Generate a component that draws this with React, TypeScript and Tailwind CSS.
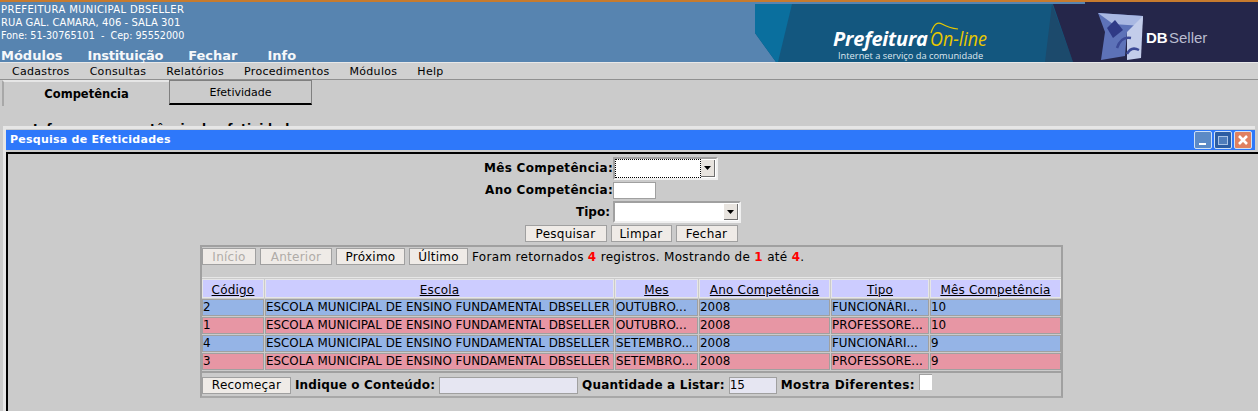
const rows = [
  { cod: '2', mes: 'OUTUBRO...', tipo: 'FUNCIONÁRI...', num: '10', bg: 'bg-[#95b4e6]' },
  { cod: '1', mes: 'OUTUBRO...', tipo: 'PROFESSORE...', num: '10', bg: 'bg-[#e796a4]' },
  { cod: '4', mes: 'SETEMBRO...', tipo: 'FUNCIONÁRI...', num: '9', bg: 'bg-[#95b4e6]' },
  { cod: '3', mes: 'SETEMBRO...', tipo: 'PROFESSORE...', num: '9', bg: 'bg-[#e796a4]' },
];

const headers = [
  { label: 'Código', w: 'w-[62px]' },
  { label: 'Escola', w: 'w-[349px]' },
  { label: 'Mes', w: 'w-[83px]' },
  { label: 'Ano Competência', w: 'w-[131px]' },
  { label: 'Tipo', w: 'w-[98px]' },
  { label: 'Mês Competência', w: 'w-[131px]' },
];

const cellClass = 'border border-[#a0a0a0] h-[17px] p-0 text-left whitespace-nowrap overflow-hidden leading-[15px] text-[11.9px]';

function Btn({ label, className, disabled }: { label: string; className: string; disabled?: boolean }) {
  return (
    <div className={`h-[17px] flex items-center justify-center bg-[#efebe7] border border-[#a0a0a0] text-[12px] font-normal tracking-[0.25px] ${disabled ? 'text-[#b0aca8]' : 'text-black'} ${className}`}>
      {label}
    </div>
  );
}

function FakeSelect({ className, focused }: { className: string; focused?: boolean }) {
  return (
    <div className={`flex items-stretch border-2 border-t-[#a0a0a0] border-l-[#a0a0a0] border-r-[#f0f0f0] border-b-[#f0f0f0] bg-white ${className}`}>
      <div className={`flex-1 ${focused ? 'border border-dotted border-black' : ''}`} />
      <div className="w-[14px] my-px mr-px flex items-center justify-center bg-[#e8e4df] border-r border-b border-[#707070]">
        <svg width="7" height="4" viewBox="0 0 7 4"><path d="M0 0h7L3.5 4z" fill="#000" /></svg>
      </div>
    </div>
  );
}

function WinBtn({ kind }: { kind: 'min' | 'max' | 'close' }) {
  const bg = kind === 'min' ? 'bg-[#5c8ac6]' : kind === 'max' ? 'bg-[#2c5da3]' : 'bg-[#e08060]';
  return (
    <div className={`w-[18px] h-[18px] rounded-[2px] border border-[#cfe0f5] flex items-center justify-center ${bg}`}>
      <svg width="14" height="14" viewBox="0 0 14 14">
        {kind === 'min' && <rect x="3" y="10" width="7" height="2" fill="#fff" />}
        {kind === 'max' && <rect x="2.5" y="3.5" width="9" height="8" fill="#4f7dbb" stroke="#a9c3e6" />}
        {kind === 'close' && <path d="M3 3l8 8M11 3l-8 8" stroke="#fff" strokeWidth="2.6" />}
      </svg>
    </div>
  );
}

function Banner() {
  return (
    <svg width="503" height="60" viewBox="0 0 503 60" className="shrink-0">
      <path d="M0 2H330V0H503V60H21L0 31z" fill="#13577f" />
      <path d="M0 2H37L23 60H21L0 31z" fill="#0a6f9e" />
      <path d="M297 2L290 60H318z" fill="#1c4a6c" />
      <path d="M298 2H330V0H503V60H318z" fill="#25264a" />
      {/* DBSeller cube */}
      <path d="M343 11L388 14L386 28L372 30L370 54L346 58L350 30z" fill="#5d72b8" />
      <path d="M343 11L388 14L387 24L358 22z" fill="#a9b8e2" />
      <path d="M372 30L388 14L386 56L372 58z" fill="#c3cdea" />
      <path d="M352 26L360 18L368 28L358 36z" fill="#2f3a86" />
      <path d="M362 46Q366 34 376 36" stroke="#3c4a96" strokeWidth="2.5" fill="none" />
      <path d="M372 52Q376 44 384 48" stroke="#3c4a96" strokeWidth="2.5" fill="none" />
      <text x="78" y="44" fill="#fff" fontSize="20" fontWeight="700" fontStyle="italic" fontFamily="'Open Sans', sans-serif" textLength="95">Prefeitura</text>
      <text x="175" y="44" fill="#e8c800" fontSize="20" fontStyle="italic" fontFamily="'Open Sans', sans-serif" textLength="57" lengthAdjust="spacingAndGlyphs">On-line</text>
      <path d="M176 31Q180 18 187 22T203 27" stroke="#e8c800" strokeWidth="1.2" fill="none" />
      <text x="83" y="57" fill="#dfe8ef" fontSize="9.3" fontFamily="'Open Sans', sans-serif">Internet a serviço da comunidade</text>
      <text x="391" y="41" fill="#fff" fontSize="15" fontWeight="700" fontFamily="'Liberation Sans', sans-serif">DB</text>
      <text x="414" y="41" fill="#b9bcd0" fontSize="15" fontFamily="'Liberation Sans', sans-serif">Seller</text>
    </svg>
  );
}

export default function App() {
  return (
    <div className="relative w-[1258px] h-[411px] overflow-hidden bg-[#cbcbcb] text-black font-['DejaVu_Sans',sans-serif] border-t-2 border-[#c77b2e]">
      {/* Header */}
      <header className="h-[60px] bg-[#5784b0] flex justify-between text-white">
        <div className="pl-px">
          <div className="text-[10px] tracking-[0.35px] leading-[13px] pt-px">PREFEITURA MUNICIPAL DBSELLER</div>
          <div className="text-[10px] tracking-[0.07px] leading-[13px]">RUA GAL. CAMARA, 406 - SALA 301</div>
          <div className="text-[9.6px] leading-[13px] whitespace-pre">Fone: 51-30765101  -  Cep: 95552000</div>
          <nav className="flex text-[13px] font-bold leading-[16px] mt-[6px] opacity-95">
            <span>Módulos</span>
            <span className="ml-[25px] tracking-[-0.2px]">Instituição</span>
            <span className="ml-[25px]">Fechar</span>
            <span className="ml-[30px]">Info</span>
          </nav>
        </div>
        <Banner />
      </header>

      {/* Menu */}
      <nav className="h-[18px] bg-[#d0d0d0] border-t border-[#e8e8e8] border-b border-b-[#909090] flex gap-[20px] pl-3 text-[11px] tracking-[0.3px] leading-[18px]">
        <span>Cadastros</span>
        <span>Consultas</span>
        <span>Relatórios</span>
        <span>Procedimentos</span>
        <span>Módulos</span>
        <span>Help</span>
      </nav>

      {/* Tabs */}
      <div className="flex items-start h-[46px] pl-[2px]">
        <div className="w-[167px] h-[26px] border-l-2 border-t-2 border-l-[#a8a8a8] border-t-[#e6e6e6] text-center text-[11.5px] font-bold leading-[24px]">Competência</div>
        <div className="w-[143px] h-[25px] bg-[#cbcbcb] border border-[#808080] border-b-2 border-b-black border-t-[#808080] text-center text-[11px] leading-[23px]">Efetividade</div>
      </div>
      <div className="absolute left-[33px] top-[119px] text-[12px] font-bold tracking-[0.2px] leading-[16px]">Informe a competência da efetividade</div>

      {/* Window */}
      <section className="absolute left-[3px] right-[3px] top-[124px] bottom-0 bg-[#cbcbcb] border-t-[3px] border-l-[3px] border-[#e6e6e6]">
        <div className="h-[20px] bg-[#2e78fa] flex items-center justify-between pl-1 pr-[3px] mt-px text-white text-[11px] font-bold tracking-[0.25px]">
          <span>Pesquisa de Efeticidades</span>
          <div className="flex gap-[2px]">
            <WinBtn kind="min" />
            <WinBtn kind="max" />
            <WinBtn kind="close" />
          </div>
        </div>
        <div className="mt-[2px] -mr-[3px] h-[300px] border-t-2 border-l-2 border-black pt-[3px]">
          {/* Search form */}
          <div className="grid grid-cols-[605px_1fr] gap-y-[2px] text-[12px]">
            <div className="text-right font-bold leading-[23px] tracking-[0.3px]">Mês Competência:</div>
            <FakeSelect className="w-[105px] h-[23px]" focused />
            <div className="text-right font-bold leading-[17px] tracking-[0.3px]">Ano Competência:</div>
            <div className="w-[43px] h-[17px] bg-white border border-[#a0a0a0]" />
            <div className="text-right font-bold leading-[22px] pr-[3px]">Tipo:</div>
            <FakeSelect className="w-[128px] h-[22px]" />
          </div>
          <div className="flex justify-center gap-1 mt-[2px] pr-[4px]">
            <Btn label="Pesquisar" className="w-[82px]" />
            <Btn label="Limpar" className="w-[61px]" />
            <Btn label="Fechar" className="w-[62px]" />
          </div>

          {/* Results */}
          <div className="ml-[192px] mt-[3px] w-[863px] h-[153px] border-2 border-[#a0a0a0] border-b-[#a8a8a8] text-[12px]">
            <div className="h-[30px] flex items-start gap-1 pt-px">
              <Btn label="Início" className="w-[54px]" disabled />
              <Btn label="Anterior" className="w-[72px]" disabled />
              <Btn label="Próximo" className="w-[69px]" />
              <Btn label="Último" className="w-[59px]" />
              <span className="leading-[19px] tracking-[0.32px] whitespace-nowrap">
                Foram retornados <b className="text-[#ff0000]">4</b> registros. Mostrando de <b className="text-[#ff0000]">1</b> até <b className="text-[#ff0000]">4</b>.
              </span>
            </div>
            <div className="border-t border-[#e6e6e6]">
              <table className="-ml-px border-separate border-spacing-[1px] table-fixed w-[861px] text-[12px]">
                <thead>
                  <tr>
                    {headers.map(h => (
                      <th key={h.label} className={`${h.w} h-[19px] p-0 pt-[2px] bg-[#ccccff] font-normal underline tracking-[0.2px] text-center border border-[#e6e6e6] leading-[14px]`}>{h.label}</th>
                    ))}
                  </tr>
                </thead>
                <tbody>
                  {rows.map(r => (
                    <tr key={r.cod} className={r.bg}>
                      <td className={cellClass}>{r.cod}</td>
                      <td className={cellClass}>ESCOLA MUNICIPAL DE ENSINO FUNDAMENTAL DBSELLER</td>
                      <td className={cellClass}>{r.mes}</td>
                      <td className={cellClass}>2008</td>
                      <td className={cellClass}>{r.tipo}</td>
                      <td className={cellClass}>{r.num}</td>
                    </tr>
                  ))}
                </tbody>
              </table>
            </div>
            <div className="border-t-2 border-[#a0a0a0] pt-[4px] flex items-start gap-1 h-[25px] font-bold leading-[17px]">
              <Btn label="Recomeçar" className="w-[89px]" />
              <span className="tracking-[0.15px]">Indique o Conteúdo:</span>
              <div className="w-[139px] h-[17px] bg-[#e6e6f2] border border-[#a0a0a0]" />
              <span className="tracking-[0.2px]">Quantidade a Listar:</span>
              <div className="w-[48px] h-[17px] bg-[#e6e6f2] border border-[#a0a0a0] font-normal leading-[15px]">15</div>
              <span className="tracking-[0.4px]">Mostra Diferentes:</span>
              <div className="w-[13px] h-[16px] -mt-[3px] bg-white border-t border-l border-[#a0a0a0]" />
            </div>
          </div>
        </div>
      </section>
    </div>
  );
}
